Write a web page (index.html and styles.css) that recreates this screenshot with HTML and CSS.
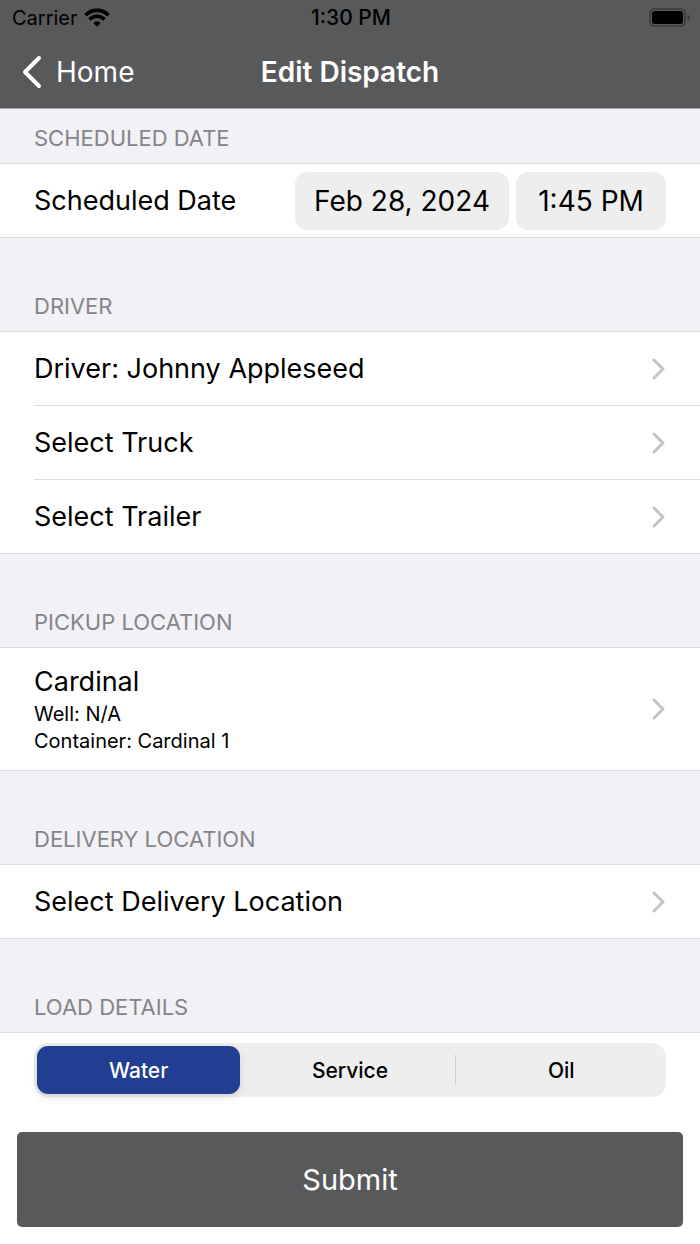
FILE: index.html
```html
<!DOCTYPE html>
<html lang="en">
<head>
  <meta charset="UTF-8">
  <meta name="viewport" content="width=device-width, initial-scale=1.0">
  <title>Edit Dispatch</title>
  <link rel="stylesheet" href="styles.css">
</head>
<body>
  <!-- Header -->
  <header>
    <div class="status-bar">
      <div class="carrier">
        <span>Carrier</span>
        <svg width="26" height="19" viewBox="0 0 26 19" aria-hidden="true">
          <path d="M1.500 7.200A16.200 16.200 0 0 1 24.500 7.200" fill="none" stroke="#000" stroke-width="3.600"/>
          <path d="M5.500 11.500A10.400 10.400 0 0 1 20.500 11.500" fill="none" stroke="#000" stroke-width="3.400"/>
          <path d="M9.300 15A5.500 5.500 0 0 1 16.700 15L13 18.800Z" fill="#000"/>
        </svg>
      </div>
      <span class="clock">1:30 PM</span>
      <svg class="battery" width="41" height="19" viewBox="0 0 41 19" aria-hidden="true">
        <rect x="1" y="1" width="35" height="17" rx="4.500" fill="none" stroke="#38393a" stroke-width="1.600"/>
        <rect x="3" y="3" width="31" height="13" rx="2.500" fill="#000"/>
        <path d="M38.500 6.500Q41 7.500 41 9.500T38.500 12.500Z" fill="#38393a"/>
      </svg>
    </div>
    <nav>
      <a href="#home" class="back">
        <svg width="20" height="34" viewBox="0 0 20 34" aria-hidden="true">
          <path d="M17 3L3 17L17 31" fill="none" stroke="#fff" stroke-width="4" stroke-linecap="round" stroke-linejoin="round"/>
        </svg>
        Home
      </a>
      <h1>Edit Dispatch</h1>
    </nav>
  </header>

  <!-- Dispatch form -->
  <form id="dispatch-form">
    <h2 class="first">Scheduled Date</h2>
    <div class="group">
      <div class="row">
        <span id="date-label">Scheduled Date</span>
        <div class="date-picker" role="group" aria-labelledby="date-label">
          <button type="button">Feb 28, 2024</button>
          <button type="button">1:45 PM</button>
        </div>
      </div>
    </div>

    <h2>Driver</h2>
    <div class="group">
      <a href="#driver" class="row">
        <span>Driver: Johnny Appleseed</span>
        <svg class="chevron" viewBox="0 0 14 22" aria-hidden="true"><path d="M2 2L11 11L2 20"/></svg>
      </a>
      <a href="#truck" class="row">
        <span>Select Truck</span>
        <svg class="chevron" viewBox="0 0 14 22" aria-hidden="true"><path d="M2 2L11 11L2 20"/></svg>
      </a>
      <a href="#trailer" class="row">
        <span>Select Trailer</span>
        <svg class="chevron" viewBox="0 0 14 22" aria-hidden="true"><path d="M2 2L11 11L2 20"/></svg>
      </a>
    </div>

    <h2>Pickup Location</h2>
    <div class="group">
      <a href="#pickup" class="row row-detail">
        <span>
          Cardinal
          <small>Well: N/A</small>
          <small>Container: Cardinal 1</small>
        </span>
        <svg class="chevron" viewBox="0 0 14 22" aria-hidden="true"><path d="M2 2L11 11L2 20"/></svg>
      </a>
    </div>

    <h2>Delivery Location</h2>
    <div class="group">
      <a href="#delivery" class="row">
        <span>Select Delivery Location</span>
        <svg class="chevron" viewBox="0 0 14 22" aria-hidden="true"><path d="M2 2L11 11L2 20"/></svg>
      </a>
    </div>

    <h2>Load Details</h2>
    <div class="load-details">
      <div class="segments" role="radiogroup" aria-label="Load type">
        <input type="radio" name="load" id="load-water" checked>
        <label for="load-water">Water</label>
        <input type="radio" name="load" id="load-service">
        <label for="load-service">Service</label>
        <input type="radio" name="load" id="load-oil">
        <label for="load-oil">Oil</label>
      </div>
    </div>

    <div class="actions">
      <button type="submit">Submit</button>
    </div>
  </form>
</body>
</html>
```
FILE: styles.css
```css
* {
  box-sizing: border-box;
}
body {
  font-family: Inter, "Liberation Sans", sans-serif;
  font-size: 28px;
  margin: 0;
  color: #000;
  background-color: #fff;
}
a {
  color: inherit;
  text-decoration: none;
}
button {
  font: inherit;
  border: none;
  cursor: pointer;
}

/* Header */
header {
  background-color: #58595b;
  border-bottom: 1px solid #a9a9ac;
}
.status-bar {
  display: grid;
  grid-template-columns: 1fr auto 1fr;
  align-items: center;
  height: 35px;
  padding: 0 10px 0 12px;
  font-size: 20px;
}
.carrier {
  display: flex;
  align-items: center;
  gap: 6px;
}
.clock {
  font-size: 21px;
  font-weight: 500;
}
.battery {
  justify-self: end;
}
nav {
  display: grid;
  grid-template-columns: 1fr auto 1fr;
  align-items: center;
  height: 73px;
  padding: 0 22px;
  color: #fff;
}
.back {
  display: flex;
  align-items: center;
  gap: 14px;
}
h1 {
  margin: 0;
  font-size: 28px;
  font-weight: 600;
}

/* Sections */
h2 {
  display: flex;
  align-items: flex-end;
  height: 93px;
  margin: 0;
  padding: 0 34px 11px;
  font-size: 22px;
  line-height: 28px;
  font-weight: 400;
  text-transform: uppercase;
  color: #858589;
  background-color: #f2f1f6;
}
h2.first {
  height: 54px;
}
.group {
  border-top: 1px solid #dcdce0;
  border-bottom: 1px solid #dcdce0;
}
.row {
  display: flex;
  justify-content: space-between;
  align-items: center;
  min-height: 73px;
  margin-left: 34px;
  padding-right: 34px;
  font-size: 27px;
}
.row + .row {
  min-height: 74px;
  border-top: 1px solid #dcdce0;
}
.row-detail {
  min-height: 122px;
}
.row-detail span {
  line-height: 38px;
}
.row-detail small {
  display: block;
  font-size: 20px;
  line-height: 27px;
}
.chevron {
  width: 14px;
  height: 22px;
  fill: none;
  stroke: #c4c4c6;
  stroke-width: 3;
  stroke-linecap: round;
  stroke-linejoin: round;
}
.date-picker {
  display: flex;
  gap: 7px;
}
.date-picker button {
  min-width: 150px;
  height: 58px;
  padding: 0 19px;
  border-radius: 12px;
  font-size: 28px;
  color: #000;
  background-color: #eee;
}

/* Load type */
.load-details {
  padding: 10px 34px 0;
  border-top: 1px solid #dcdce0;
}
.segments {
  display: flex;
  gap: 8px;
  height: 54px;
  padding: 3px;
  border-radius: 14px;
  background-color: #eee;
}
.segments input {
  position: absolute;
  opacity: 0;
}
.segments label {
  position: relative;
  display: flex;
  flex: 1;
  justify-content: center;
  align-items: center;
  border-radius: 11px;
  font-size: 21px;
  font-weight: 500;
  cursor: pointer;
}
.segments input:checked + label {
  color: #fff;
  background-color: #223e93;
  box-shadow: 0 3px 8px rgba(0, 0, 0, 0.12);
}
.segments label:last-child::before {
  content: "";
  position: absolute;
  left: -5px;
  top: 9px;
  bottom: 9px;
  width: 1px;
  background-color: #cfcfd1;
}

/* Submit */
.actions {
  padding: 35px 17px 17px;
}
.actions button {
  width: 100%;
  height: 95px;
  border-radius: 5px;
  font-size: 29px;
  color: #fff;
  background-color: #58595b;
}
```
